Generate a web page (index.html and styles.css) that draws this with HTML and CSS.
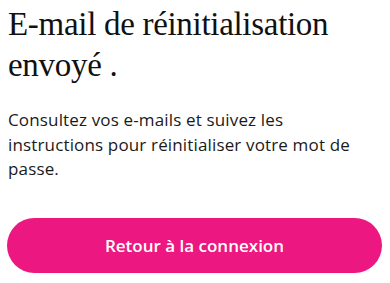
FILE: index.html
```html
<!DOCTYPE html>
<html lang="fr">
<head>
    <meta charset="UTF-8">
    <meta name="viewport" content="width=device-width, initial-scale=1.0">
    <title>E-mail envoyé</title>
    <link rel="stylesheet" href="styles.css">
</head>
<body>
    <div class="container">
        <h1>E-mail de réinitialisation envoyé .</h1>

        <p class="message">Consultez vos e-mails et suivez les instructions pour réinitialiser votre mot de passe.</p>

        <button class="back-btn">Retour à la connexion</button>
    </div>
</body>
</html>
```

FILE: styles.css
```css
* {
    margin: 0;
    padding: 0;
    box-sizing: border-box;
}

body {
    background: #fff;
    color: #111;
    font-family: 'Open Sans', 'Noto Sans', sans-serif;
}

.container {
    padding: 4px 8px 0 8px;
}

h1 {
    font-family: 'Liberation Serif', 'DejaVu Serif', serif;
    font-weight: 400;
    font-size: 33px;
    line-height: 41px;
    letter-spacing: -0.3px;
    color: #111;
}

.message {
    margin-top: 22px;
    font-size: 17px;
    line-height: 24.5px;
    letter-spacing: 0.15px;
    color: #1a1a1a;
}

.back-btn {
    display: block;
    width: calc(100% + 1px);
    height: 55px;
    margin: 36px 0 0 -1px;
    border: none;
    border-radius: 28px;
    background: #ec1780;
    color: #fff;
    font-family: 'Open Sans', 'Noto Sans', sans-serif;
    font-size: 17px;
    font-weight: 600;
    cursor: pointer;
}
```
